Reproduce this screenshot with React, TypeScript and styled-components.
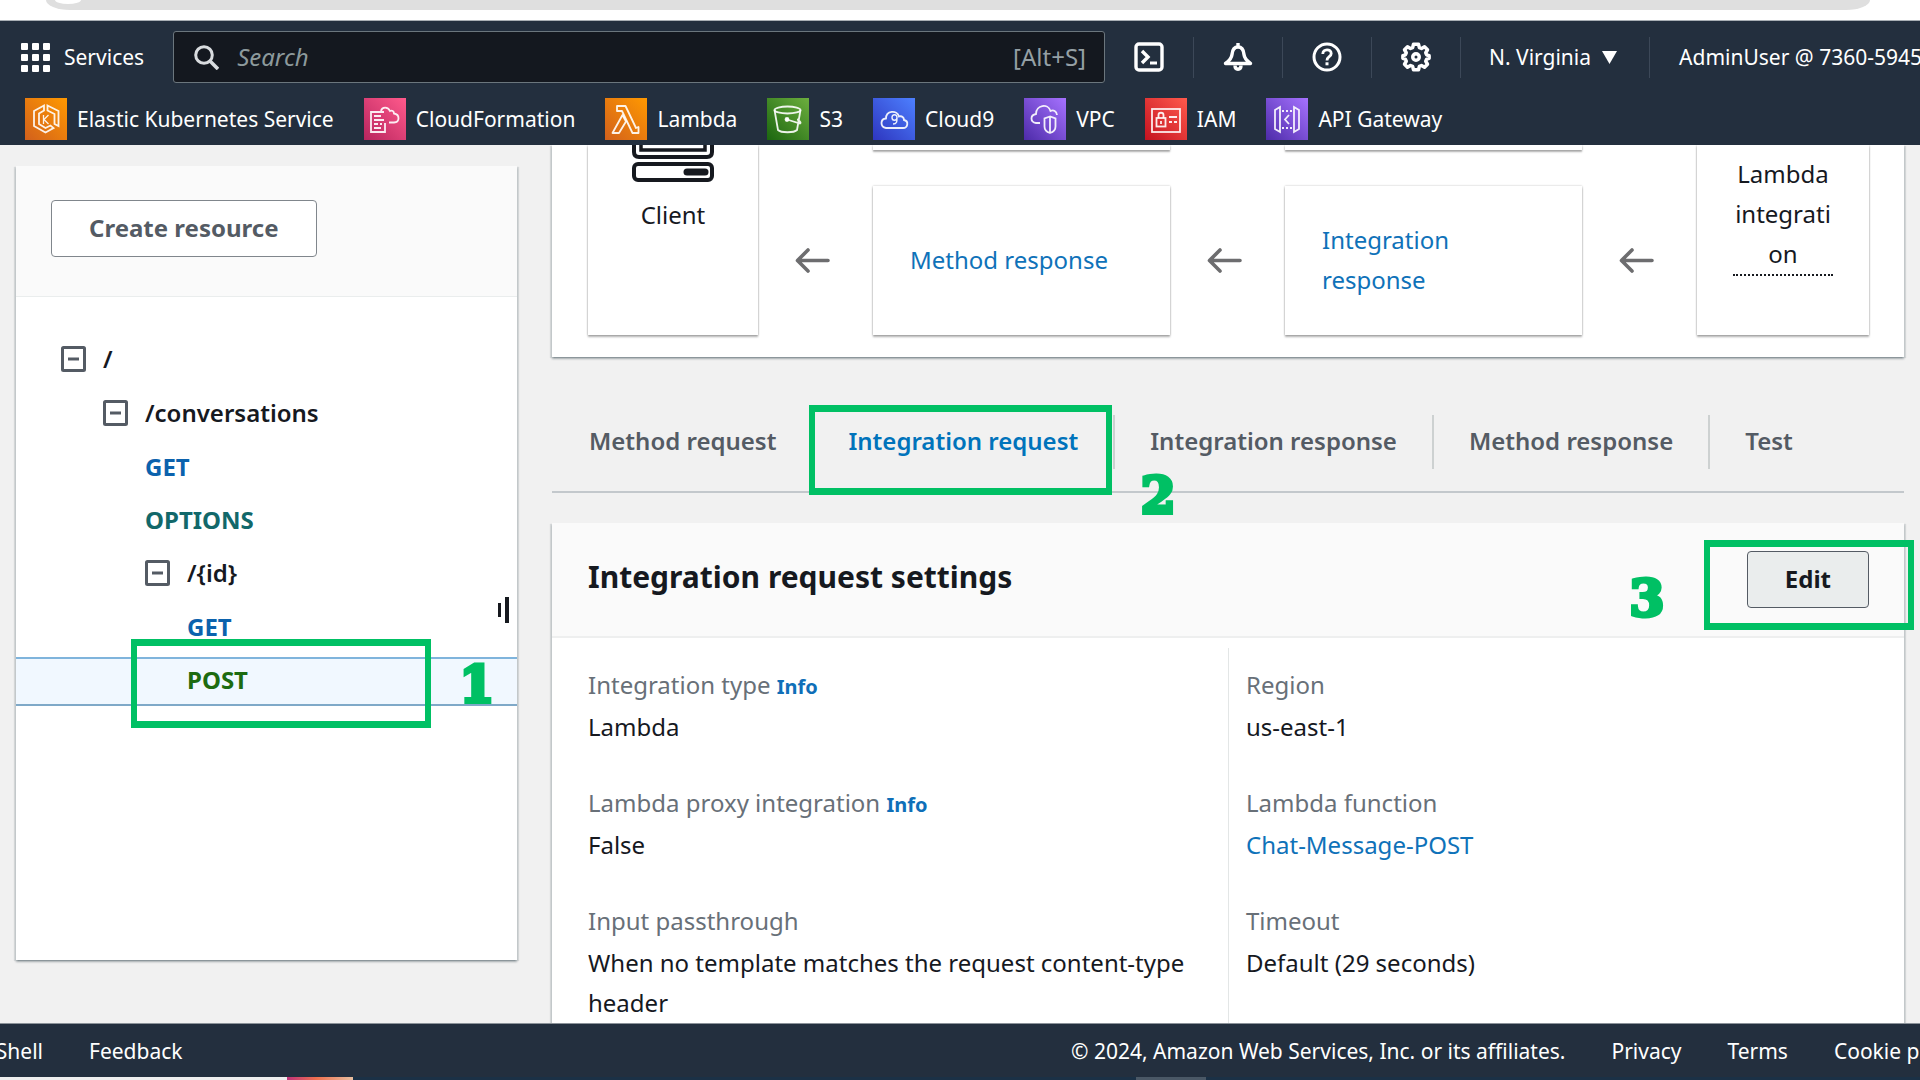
import React from 'react';
import styled, { createGlobalStyle } from 'styled-components';

const GlobalStyle = createGlobalStyle`
  *, *::before, *::after { box-sizing: border-box; }
  html, body, #root { height: 100%; }
  body {
    margin: 0;
    overflow: hidden;
    background: #f1f1f1;
    color: #16191f;
    font-family: "Noto Sans", "Open Sans", sans-serif;
    font-size: 24px;
    line-height: 40px;
  }
  button, input { font: inherit; color: inherit; }
  button { cursor: pointer; padding: 0; border: 0; background: none; }
  a { text-decoration: none; }
  h2, ul, dl, dd, dt { margin: 0; padding: 0; }
  ul { list-style: none; }
  svg { display: block; flex: none; }
`;

const Page = styled.div`
  display: flex;
  flex-direction: column;
  height: 100vh;
  min-width: 1400px;
  overflow: hidden;
`;

/* Browser frame */

const BrowserStrip = styled.div`
  flex: none;
  height: 21px;
  padding: 0 50px 0 46px;
  background: #fff;
  border-bottom: 1px solid #a9afb5;
`;

const AddressBar = styled.div`
  height: 10px;
  padding-left: 9px;
  overflow: hidden;
  background: #dfdfdf;
  border-radius: 0 0 24px 24px / 0 0 10px 10px;
`;

const SiteBadge = styled.div`
  width: 26px;
  height: 4px;
  background: #fff;
  border-radius: 0 0 13px 13px / 0 0 4px 4px;
`;

/* Console header */

const Header = styled.header`
  flex: none;
  display: flex;
  flex-direction: column;
  gap: 15px;
  padding: 10px 0 5px;
  background: #232f3e;
  color: #fff;
  font-size: 21px;
  white-space: nowrap;
`;

const TopRow = styled.div`
  display: flex;
  align-items: center;
  height: 52px;
  padding-left: 21px;
`;

const ServicesButton = styled.button`
  display: flex;
  align-items: center;
  gap: 14px;
  margin-right: 29px;
`;

const SearchBox = styled.label`
  flex: 1;
  min-width: 0;
  display: flex;
  align-items: center;
  gap: 18px;
  height: 52px;
  padding: 0 18px 0 20px;
  background: #14181f;
  border: 1px solid #6b767d;
  border-radius: 3px;
`;

const SearchInput = styled.input`
  flex: 1;
  min-width: 0;
  padding: 0;
  border: 0;
  outline: 0;
  background: none;
  font-size: 24px;
  font-style: italic;
  &::placeholder { color: #8d9a9c; opacity: 1; }
`;

const Shortcut = styled.span`
  color: #95a0a5;
  font-size: 24px;
`;

const Utilities = styled.div`
  flex: none;
  display: flex;
  width: 815px;
  overflow: hidden;
`;

const IconButton = styled.button`
  flex: none;
  display: grid;
  place-items: center;
  width: 89px;
  height: 41px;
  border-right: 1px solid #3c4858;
`;

const RegionButton = styled.button`
  flex: none;
  display: flex;
  align-items: center;
  gap: 11px;
  height: 41px;
  padding: 0 32px 0 28px;
  border-right: 1px solid #3c4858;
`;

const AccountButton = styled.button`
  flex: none;
  height: 41px;
  padding-left: 29px;
`;

const Shortcuts = styled.nav`
  display: flex;
  gap: 30px;
  padding-left: 25px;
`;

const ServiceLink = styled.a`
  display: flex;
  align-items: center;
  gap: 10px;
  color: #fff;
`;

const ServiceTile = styled.span<{ $from: string; $to: string }>`
  width: 42px;
  height: 42px;
  background: linear-gradient(45deg, ${p => p.$from}, ${p => p.$to});
`;

/* Body */

const Body = styled.div`
  flex: 1;
  min-height: 0;
  display: flex;
  gap: 35px;
  padding: 0 16px;
  overflow: hidden;
`;

const Panel = styled.section`
  background: #fff;
  box-shadow: 0 2px 2px rgba(0, 28, 36, 0.3), 2px 1px 1px rgba(0, 28, 36, 0.1), -2px 1px 1px rgba(0, 28, 36, 0.1);
`;

const Sidebar = styled(Panel).attrs({ as: 'aside' })`
  position: relative;
  flex: none;
  width: 501px;
  margin: 21px 0 63px;
`;

const SidebarHead = styled.div`
  display: flex;
  padding: 34px 35px 39px;
  background: #fafafa;
  border-bottom: 1px solid #eaeded;
`;

const Button = styled.button<{ $active?: boolean }>`
  height: 57px;
  padding: 0 37px 2px;
  border: 1px solid ${p => (p.$active ? '#545b64' : '#80868c')};
  border-radius: 4px;
  background: ${p => (p.$active ? '#eaeded' : '#fff')};
  color: ${p => (p.$active ? '#16191f' : '#545b64')};
  font-weight: 700;
`;

const Tree = styled.ul`
  padding-top: 39px;
  font-weight: 600;
`;

const Branch = styled.ul`
  padding-top: 1px;
`;

const TreeRow = styled.div<{ $depth: number; $selected?: boolean }>`
  position: relative;
  display: flex;
  align-items: center;
  gap: 17px;
  height: 49px;
  margin-bottom: 4px;
  padding-bottom: 3px;
  padding-left: ${p => 45 + p.$depth * 42}px;
  ${p => p.$selected && `
    background: #f1f8ff;
    box-shadow: inset 0 2px #7fb4dc, inset 0 -2px #7fa9c8;
  `}
`;

const MethodLink = styled.a<{ $tone: string }>`
  color: ${p => p.$tone};
  font-weight: 700;
`;

const ResizeHandle = styled.button`
  position: absolute;
  top: 431px;
  right: 8px;
  display: flex;
  align-items: center;
  gap: 4px;
  &::before { content: ""; width: 3px; height: 14px; background: #16191f; }
  &::after { content: ""; width: 4px; height: 26px; background: #16191f; }
`;

const Main = styled.main`
  flex: 1;
  min-width: 0;
`;

/* Method execution diagram */

const Diagram = styled(Panel)`
  display: grid;
  grid-template-columns: 170px 115px minmax(0, 1fr) 115px minmax(0, 1fr) 115px 172px;
  grid-template-rows: 5px 149px;
  row-gap: 36px;
  padding: 0 35px 22px 36px;
`;

const cardShadow = '0 2px 2px rgba(0, 0, 0, 0.3), 0 0 2px rgba(0, 0, 0, 0.25)';

const EndCard = styled.div<{ $top: number }>`
  grid-row: 1 / 3;
  display: flex;
  flex-direction: column;
  align-items: center;
  padding: ${p => p.$top}px 36px 0;
  text-align: center;
  box-shadow: ${cardShadow};
`;

const EndCardLabel = styled.span`
  padding-top: 13px;
`;

const Term = styled.span`
  width: 100%;
  overflow-wrap: anywhere;
  border-bottom: 2px dotted #16191f;
`;

const StageCard = styled.div<{ $col: number; $row: number }>`
  grid-column: ${p => p.$col};
  grid-row: ${p => p.$row};
  display: flex;
  align-items: center;
  padding: 0 37px 2px;
  box-shadow: ${cardShadow};
`;

const StageLink = styled.a`
  max-width: 200px;
  color: #0f72b9;
`;

const ArrowCell = styled.div<{ $col: number }>`
  grid-column: ${p => p.$col};
  grid-row: 2;
  display: grid;
  place-items: center;
  padding-right: 7px;
`;

/* Tabs */

const Tabs = styled.nav`
  display: flex;
  margin: 48px 0 30px;
  padding: 10px 2px 22px;
  border-bottom: 2px solid #c3c8cc;
`;

const Tab = styled.button<{ $active?: boolean }>`
  position: relative;
  height: 54px;
  padding: 0 35px 2px;
  border-right: 2px solid #cdd1d1;
  color: ${p => (p.$active ? '#0073bb' : '#545b64')};
  font-weight: 600;
  white-space: nowrap;
  &:last-child { border-right: 0; }
`;

/* Settings */

const SettingsHead = styled.div`
  display: flex;
  align-items: center;
  justify-content: space-between;
  height: 115px;
  padding: 0 35px 0 36px;
  background: #fafafa;
  border-bottom: 2px solid #eeefef;
`;

const Title = styled.h2`
  padding-bottom: 6px;
  font-size: 30px;
  font-weight: 700;
`;

const EditSlot = styled.div`
  position: relative;
  display: flex;
`;

const Columns = styled.div`
  display: grid;
  grid-template-columns: 1fr 1fr;
  padding: 10px 36px 0;
`;

const Fields = styled.dl`
  display: flex;
  flex-direction: column;
  gap: 35px;
  padding: 16px 18px 36px 0;
  & + & {
    padding-left: 17px;
    border-left: 1px solid #e3e6e6;
  }
`;

const FieldName = styled.dt`
  color: #687078;
  line-height: 42px;
`;

const FieldValue = styled.dd`
  padding-top: 1px;
`;

const InfoLink = styled.a`
  color: #0f6fb8;
  font-size: 20px;
  font-weight: 700;
  line-height: 20px;
`;

const ValueLink = styled.a`
  color: #0f72b9;
`;

/* Step markers laid over the page */

const Outline = styled.span<{ $inset: string }>`
  position: absolute;
  inset: ${p => p.$inset};
  border: 7px solid #00c064;
  border-width: 7px 6px;
  pointer-events: none;
`;

const StepNumber = styled.span<{ $top: number; $right: number }>`
  position: absolute;
  top: ${p => p.$top}px;
  right: ${p => p.$right}px;
  z-index: 1;
  width: 40px;
  color: #00c064;
  font: 700 50px/40px "DejaVu Serif", serif;
  text-align: center;
  -webkit-text-stroke: 4px #00c064;
  pointer-events: none;
`;

/* Footer */

const Footer = styled.footer`
  flex: none;
  display: flex;
  align-items: center;
  justify-content: space-between;
  height: 54px;
  background: #232f3e;
  border-top: 1px solid #8b9299;
  font-size: 21px;
  white-space: nowrap;
`;

const FooterGroup = styled.div`
  flex: none;
  display: flex;
  gap: 46px;
  color: #fff;
`;

const LegalGroup = styled(FooterGroup)`
  width: 849px;
  overflow: hidden;
`;

const FooterLink = styled.a`
  color: #fff;
`;

const ShellLink = styled(FooterLink)`
  display: flex;
  justify-content: flex-end;
  width: 43px;
  overflow: hidden;
`;

const Taskbar = styled.div`
  flex: none;
  display: flex;
  height: 3px;
  background: #1b3146;
`;

const TaskSegment = styled.span<{ $width: number; $fill: string; $start?: number }>`
  width: ${p => p.$width}px;
  margin-left: ${p => p.$start ?? 0}px;
  background: ${p => p.$fill};
`;

/* Icons */

const GridIcon = () => (
  <svg width="29" height="29" viewBox="0 0 29 29" fill="#fff">
    {[0, 11, 22].map(y => [0, 11, 22].map(x => <rect key={`${x}-${y}`} x={x} y={y} width="7" height="7" rx="1" />))}
  </svg>
);

const SearchIcon = () => (
  <svg width="25" height="25" viewBox="0 0 25 25" fill="none" stroke="#d9dcdf" strokeWidth="3">
    <circle cx="10" cy="10" r="8.3" />
    <path d="M16 16l8 8" strokeWidth="3.6" />
  </svg>
);

const ShellIcon = () => (
  <svg width="30" height="30" viewBox="0 0 30 30" fill="none" stroke="#fff" strokeWidth="3.4">
    <rect x="2" y="2" width="26" height="26" rx="3" />
    <path d="M8 9l6 6-6 6" />
    <path d="M16 21h7" strokeWidth="3" />
  </svg>
);

const BellIcon = () => (
  <svg width="30" height="30" viewBox="0 0 30 30" fill="none" stroke="#fff" strokeWidth="3.4" strokeLinejoin="round">
    <path d="M2.500 21.500c3.500-2.500 6-4.500 6.500-9 .4-4.500 2.500-7.500 6-7.500s5.600 3 6 7.500c.5 4.500 3 6.500 6.500 9z" />
    <path d="M15 1v4M12 23.500c0 5 6 5 6 0" />
  </svg>
);

const HelpIcon = () => (
  <svg width="30" height="30" viewBox="0 0 30 30" fill="none" stroke="#fff" strokeWidth="3">
    <circle cx="15" cy="15" r="13" />
    <path d="M10.800 12c0-5.500 8.400-5.500 8.400-.5 0 3.500-4.200 3-4.200 7" strokeWidth="2.800" />
    <path d="M15 20.300v3" />
  </svg>
);

const GearIcon = () => (
  <svg width="30" height="30" viewBox="0 0 24 24" fill="none" stroke="#fff" strokeWidth="2.800" strokeLinejoin="round">
    <path d="M10 1.800h4l.7 2.700 1.700.7 2.400-1.400 2.400 2.400-1.400 2.400.7 1.700 2 .7v2l-2 .7-.7 1.700 1.400 2.400-2.400 2.400-2.400-1.400-1.700.7-.7 2.700h-4l-.7-2.700-1.700-.7-2.400 1.400-2.400-2.400 1.400-2.400-.7-1.700-2-.7v-2l2-.7.7-1.700-1.400-2.400 2.400-2.400 2.400 1.400 1.700-.7z" />
    <circle cx="12" cy="12" r="2.600" />
  </svg>
);

const CaretIcon = () => (
  <svg width="15" height="13" viewBox="0 0 15 13"><path d="M0 0h15L7.500 13z" fill="#fff" /></svg>
);

const MinusBoxIcon = () => (
  <svg width="25" height="26" viewBox="0 0 25 26" fill="none" stroke="#545b64" strokeWidth="3">
    <rect x="1.500" y="1.500" width="22" height="23" rx="1" />
    <path d="M7 13h11" />
  </svg>
);

const ArrowIcon = () => (
  <svg width="35" height="25" viewBox="0 0 35 25" fill="none" stroke="#6d6d6f" strokeWidth="3.600" strokeLinecap="round" strokeLinejoin="round">
    <path d="M33 12.500H3M13 2L2.500 12.500 13 23" />
  </svg>
);

const ClientIcon = () => (
  <svg width="82" height="37" viewBox="0 0 82 37" fill="none" stroke="#16191f" strokeWidth="4">
    <path d="M2 0v7q0 5 5 5h68q5 0 5-5V0" />
    <path d="M9 0v5h64V0" strokeWidth="3.500" />
    <rect x="2" y="19" width="78" height="16" rx="4" />
    <path d="M55 27h18" strokeWidth="7" strokeLinecap="round" />
  </svg>
);

const glyphs: Record<string, React.ReactNode> = {
  eks: (
    <>
      <path d="M19 7.500L9 13v15l11.500 6.500 8-4.500-3-2.500-5 2.500-6.500-4V15.500L19 12.500z" />
      <path d="M22.500 7.500L33.500 13v15l-4-2V16l-7-3.500z" />
      <path d="M18.500 17v9M23.500 17l-4.500 4.500L23.500 26" strokeWidth="1.300" />
    </>
  ),
  cloudformation: (
    <>
      <path d="M20 14H7v20h14v-9" />
      <path d="M10 18h7M10 22h10M10 26h4M16 26h2M10 30h7" />
      <path d="M17 13c1-4.500 7-4.500 9 0 2-1 4 0 4 2.500 6 1 6 8.500 0 9h-5" />
    </>
  ),
  lambda: (
    <>
      <path d="M12 8h8.500L31 30l2.500-1V35h-6L17 13h-5z" strokeLinejoin="round" />
      <path d="M17.500 17L7.500 35H14l7-11.500z" strokeLinejoin="round" />
    </>
  ),
  s3: (
    <>
      <ellipse cx="20.500" cy="12" rx="13" ry="3.500" />
      <path d="M7.500 12l3.500 20c3 3 16 3 19 0l3.500-20M20 21.500l13 4c2-1-2-4-3-4" />
      <circle cx="20" cy="21.500" r="1.500" fill="#fff" />
    </>
  ),
  cloud9: (
    <>
      <path d="M13 30c-6-1-6-9 0-9.500 0-8 11-9 13-2 3-1 5 1 5 3.500 5 1 4 8-1 8z" />
      <path d="M24 19.500a2.500 2.800 0 1 0-5 0a2.500 2.800 0 1 0 5 0c0 4 0 6.500-4 6.500" strokeWidth="1.400" />
    </>
  ),
  vpc: (
    <>
      <path d="M16 25h-4c-6-1-6-8 0-9 0-9 12-11 14.500-3 3-1.500 6 0 6.500 4" />
      <path d="M26 18.500l-5.500 2v8c0 3.500 2 5.500 5.500 6.500 3.500-1 5.500-3 5.500-6.500v-8zM26 18.500V35" />
    </>
  ),
  iam: (
    <>
      <rect x="7" y="11" width="28" height="23" />
      <rect x="11.500" y="20" width="9" height="8.500" />
      <path d="M13.500 20v-3c0-3 5-3 5 0v3M16 23v3M24 19h8M24 24h3M29 24h3" />
    </>
  ),
  apigateway: (
    <>
      <path d="M14 9L9 12v19l5 3zM28 9l5 3v19l-5 3z" />
      <path d="M23 17l-4 4.500 4 4.500" />
      <path d="M16 13h10M16 30h10" strokeDasharray="2 2" />
    </>
  ),
};

const services = [
  { id: 'eks', name: 'Elastic Kubernetes Service', from: '#d2601c', to: '#ff9900' },
  { id: 'cloudformation', name: 'CloudFormation', from: '#b8255e', to: '#ff5a8c' },
  { id: 'lambda', name: 'Lambda', from: '#d2601c', to: '#ff9900' },
  { id: 's3', name: 'S3', from: '#1b660f', to: '#6cae3e' },
  { id: 'cloud9', name: 'Cloud9', from: '#2e36bf', to: '#4d80ff' },
  { id: 'vpc', name: 'VPC', from: '#4d2ba9', to: '#a672ff' },
  { id: 'iam', name: 'IAM', from: '#c41220', to: '#ff5a4c' },
  { id: 'apigateway', name: 'API Gateway', from: '#4d2ba9', to: '#a672ff' },
];

const Resource = ({ depth, path, children }: { depth: number; path: string; children: React.ReactNode }) => (
  <li>
    <TreeRow $depth={depth}>
      <button type="button" aria-label={`Collapse ${path}`}><MinusBoxIcon /></button>
      <span>{path}</span>
    </TreeRow>
    <Branch>{children}</Branch>
  </li>
);

const Method = ({ depth, name, tone }: { depth: number; name: string; tone: string }) => (
  <li>
    <TreeRow $depth={depth}>
      <MethodLink href="#" $tone={tone}>{name}</MethodLink>
    </TreeRow>
  </li>
);

const Field = ({ name, info, children }: { name: string; info?: boolean; children: React.ReactNode }) => (
  <div>
    <FieldName>{name}{info && <> <InfoLink href="#">Info</InfoLink></>}</FieldName>
    <FieldValue>{children}</FieldValue>
  </div>
);

export default function App() {
  return (
    <Page>
      <GlobalStyle />
      <BrowserStrip><AddressBar><SiteBadge /></AddressBar></BrowserStrip>

      <Header>
        <TopRow>
          <ServicesButton type="button"><GridIcon />Services</ServicesButton>
          <SearchBox>
            <SearchIcon />
            <SearchInput type="search" placeholder="Search" aria-label="Search" />
            <Shortcut>[Alt+S]</Shortcut>
          </SearchBox>
          <Utilities>
            <IconButton type="button" aria-label="CloudShell"><ShellIcon /></IconButton>
            <IconButton type="button" aria-label="Notifications"><BellIcon /></IconButton>
            <IconButton type="button" aria-label="Help"><HelpIcon /></IconButton>
            <IconButton type="button" aria-label="Settings"><GearIcon /></IconButton>
            <RegionButton type="button">N. Virginia<CaretIcon /></RegionButton>
            <AccountButton type="button">AdminUser @ 7360-5945</AccountButton>
          </Utilities>
        </TopRow>
        <Shortcuts>
          {services.map(s => (
            <ServiceLink key={s.id} href="#">
              <ServiceTile $from={s.from} $to={s.to}>
                <svg width="42" height="42" viewBox="0 0 42 42" fill="none" stroke="#fff" strokeOpacity="0.9" strokeWidth="1.800">{glyphs[s.id]}</svg>
              </ServiceTile>
              {s.name}
            </ServiceLink>
          ))}
        </Shortcuts>
      </Header>

      <Body>
        <Sidebar>
          <SidebarHead><Button type="button">Create resource</Button></SidebarHead>
          <Tree>
            <Resource depth={0} path="/">
              <Resource depth={1} path="/conversations">
                <Method depth={2} name="GET" tone="#0b62ad" />
                <Method depth={2} name="OPTIONS" tone="#12686a" />
                <Resource depth={2} path="/{id}">
                  <Method depth={3} name="GET" tone="#0b62ad" />
                  <li>
                    <TreeRow $depth={3} $selected>
                      <MethodLink href="#" $tone="#1d6b10">POST</MethodLink>
                      <Outline $inset="-18px 86px -22px 115px" />
                      <StepNumber $top={8} $right={20}>1</StepNumber>
                    </TreeRow>
                  </li>
                </Resource>
              </Resource>
            </Resource>
          </Tree>
          <ResizeHandle type="button" aria-label="Resize panel" />
        </Sidebar>

        <Main>
          <Diagram>
            <EndCard $top={0}>
              <ClientIcon />
              <EndCardLabel>Client</EndCardLabel>
            </EndCard>
            <StageCard $col={3} $row={1} />
            <StageCard $col={5} $row={1} />
            <ArrowCell $col={2}><ArrowIcon /></ArrowCell>
            <StageCard $col={3} $row={2}><StageLink href="#">Method response</StageLink></StageCard>
            <ArrowCell $col={4}><ArrowIcon /></ArrowCell>
            <StageCard $col={5} $row={2}><StageLink href="#">Integration response</StageLink></StageCard>
            <ArrowCell $col={6}><ArrowIcon /></ArrowCell>
            <EndCard $top={9}><Term>Lambda integration</Term></EndCard>
          </Diagram>

          <Tabs>
            <Tab type="button">Method request</Tab>
            <Tab type="button" $active>
              Integration request
              <Outline $inset="-10px 1px -26px -4px" />
              <StepNumber $top={61} $right={-65}>2</StepNumber>
            </Tab>
            <Tab type="button">Integration response</Tab>
            <Tab type="button">Method response</Tab>
            <Tab type="button">Test</Tab>
          </Tabs>

          <Panel>
            <SettingsHead>
              <Title>Integration request settings</Title>
              <EditSlot>
                <Button type="button" $active>Edit</Button>
                <Outline $inset="-11px -45px -22px -43px" />
                <StepNumber $top={28} $right={202}>3</StepNumber>
              </EditSlot>
            </SettingsHead>
            <Columns>
              <Fields>
                <Field name="Integration type" info>Lambda</Field>
                <Field name="Lambda proxy integration" info>False</Field>
                <Field name="Input passthrough">When no template matches the request content-type header</Field>
              </Fields>
              <Fields>
                <Field name="Region">us-east-1</Field>
                <Field name="Lambda function"><ValueLink href="#">Chat-Message-POST</ValueLink></Field>
                <Field name="Timeout">Default (29 seconds)</Field>
              </Fields>
            </Columns>
          </Panel>
        </Main>
      </Body>

      <Footer>
        <FooterGroup>
          <ShellLink href="#">Shell</ShellLink>
          <FooterLink href="#">Feedback</FooterLink>
        </FooterGroup>
        <LegalGroup>
          <span>© 2024, Amazon Web Services, Inc. or its affiliates.</span>
          <FooterLink href="#">Privacy</FooterLink>
          <FooterLink href="#">Terms</FooterLink>
          <FooterLink href="#">Cookie preferences</FooterLink>
        </LegalGroup>
      </Footer>
      <Taskbar>
        <TaskSegment $width={287} $fill="#eeeeee" />
        <TaskSegment $width={66} $fill="linear-gradient(90deg, #c0327a, #f0714f 45%, #e8bfa0)" />
        <TaskSegment $width={70} $fill="#4a5866" $start={783} />
      </Taskbar>
    </Page>
  );
}
